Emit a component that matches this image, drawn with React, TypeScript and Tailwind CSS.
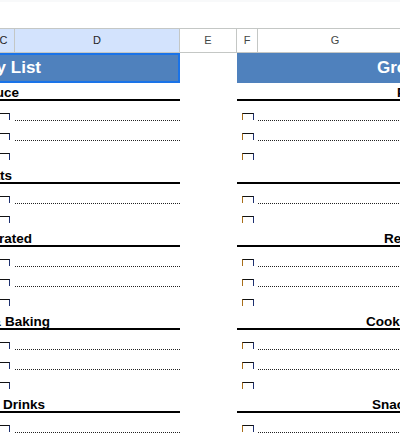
import React from "react";

type Section = {
  left: string;
  leftEnd: number;
  right: string;
  rightStart: number;
  items: number;
};

const sections: Section[] = [
  { left: "Produce", leftEnd: 26, right: "Personal Care", rightStart: 160, items: 3 },
  { left: "Meats", leftEnd: 19, right: "Household", rightStart: 175, items: 2 },
  { left: "Refrigerated", leftEnd: 39, right: "Restroom", rightStart: 147, items: 3 },
  { left: "Pantry & Baking", leftEnd: 57, right: "Cooking", rightStart: 129, items: 3 },
  { left: "Snacks & Drinks", leftEnd: 52, right: "Snacks", rightStart: 135, items: 3 },
];

const cols = "grid grid-cols-[22px_165px_57px_21px_minmax(0,1fr)]";

function Box() {
  return (
    <div className="w-[12px] h-[7px] border-t border-l border-r border-t-[#111] border-l-[#a86d18] border-r-[#1c2f70]" />
  );
}

function ColHead({ label, selected }: { label: string; selected?: boolean }) {
  return (
    <div
      className={
        selected
          ? "flex items-center justify-center border-r border-[#c4c7c5] bg-[#d3e3fd] text-[#1f1f1f]"
          : "flex items-center justify-center border-r border-[#c4c7c5] bg-white text-[#444746]"
      }
    >
      {label}
    </div>
  );
}

function HeaderRow({ s }: { s: Section }) {
  return (
    <div className={`${cols} h-[23px] text-[13.5px] leading-[13px] font-bold text-black`}>
      <div className="col-span-2 flex items-end border-b-2 border-black">
        <div className="flex justify-end whitespace-nowrap" style={{ width: s.leftEnd }}>
          {s.left}
        </div>
      </div>
      <div />
      <div className="col-span-2 flex items-end border-b-2 border-black overflow-hidden whitespace-nowrap">
        <span style={{ marginLeft: s.rightStart }}>{s.right}</span>
      </div>
    </div>
  );
}

function ItemRow({ line }: { line: boolean }) {
  const dots = line ? "border-b border-dotted border-[#222]" : "";
  return (
    <div className={`${cols} h-[20px]`}>
      <div className="flex items-end pl-[5px] pb-[1px]">
        <Box />
      </div>
      <div className={dots} />
      <div />
      <div className="flex items-end pl-[5px] pb-[1px]">
        <Box />
      </div>
      <div className={dots} />
    </div>
  );
}

export default function App() {
  return (
    <div className="w-[400px] h-[438px] overflow-hidden bg-white font-['Liberation_Sans',Arial,sans-serif]">
      <div className="h-[2px] bg-[#f8f9fa]" />
      <div className="h-[26px]" />
      <div className="-ml-[7px] w-[420px]">
        <div className={`${cols} h-[25px] border-t border-b border-[#c4c7c5] text-[11px]`}>
          <ColHead label="C" selected />
          <ColHead label="D" selected />
          <ColHead label="E" />
          <ColHead label="F" />
          <ColHead label="G" />
        </div>
        <div className={`${cols} h-[25px] text-[17px] font-bold text-white`}>
          <div className="col-span-2 flex items-center border-2 border-[#1a73e8] bg-[#4f81bd]">
            <div className="flex justify-end whitespace-nowrap w-[46px]">Grocery List</div>
          </div>
          <div />
          <div className="col-span-2 flex items-center bg-[#4f81bd] overflow-hidden whitespace-nowrap">
            <span className="ml-[140px]">Grocery List</span>
          </div>
        </div>
        {sections.map((s, i) => (
          <React.Fragment key={i}>
            <HeaderRow s={s} />
            {Array.from({ length: s.items }).map((_, j) => (
              <ItemRow key={j} line={j < s.items - 1 || i === sections.length - 1} />
            ))}
          </React.Fragment>
        ))}
      </div>
    </div>
  );
}
